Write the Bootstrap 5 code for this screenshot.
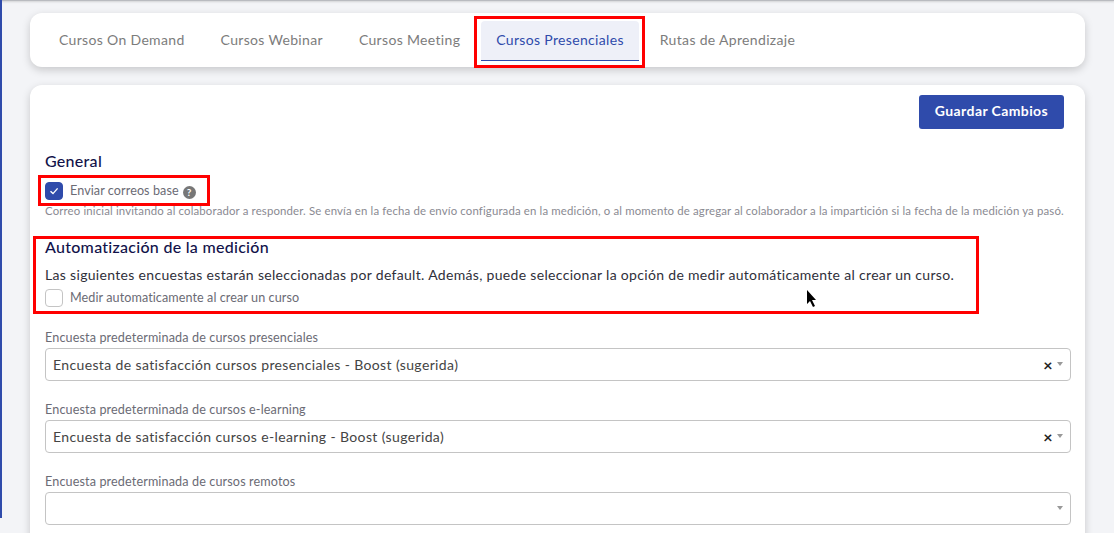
<!DOCTYPE html>
<html lang="es"><head><meta charset="utf-8"><title>Cursos Presenciales</title>
<link rel="stylesheet" href="https://cdn.jsdelivr.net/npm/bootstrap@5.3.0/dist/css/bootstrap.min.css">
<style>
html,body{height:533px;overflow:hidden}
body{background:#f3f4f7;font-family:"Lato","Noto Sans",sans-serif;color:#333;position:relative}
.side-strip{position:absolute;left:0;top:0;width:2px;height:518px;background:#2f4bab}
.top-line{height:1px;background:#b9bbc0;box-shadow:0 1px 2px rgba(0,0,0,.2)}
.page-wrap{padding:12px 29px 0 30px}
.panel{background:#fff;border:0;border-radius:12px;box-shadow:0 3px 8px rgba(0,0,0,.18)}
.tabs-panel{height:54px;padding:8px 14px 6px;margin-bottom:18px;gap:6px}
.tab-item{height:40px;padding:0 15px;font-size:14px;line-height:37px;color:#7c7c7c;letter-spacing:.33px;border-bottom:1px solid transparent;border-radius:4px 4px 0 0;text-decoration:none;white-space:nowrap}
.tab-item.is-on{background:#eef0f8;color:#2f4bab;border-bottom-color:#2f4bab}
.main-panel{padding:10px 14px 0 15px;height:470px;border-radius:12px}
.save-btn{background:#2f4bab;color:#fff;font-size:14px;font-weight:700;width:145px;height:34px;padding:0 0 3px;border:0;border-radius:3px;margin-right:7px;letter-spacing:.4px}
.sec-title{font-size:16px;font-weight:500;color:#12124a;line-height:20px;margin:0;letter-spacing:.28px}
.check-row{height:20px;font-size:12.6px;color:#6b6b75;letter-spacing:.08px;gap:7px}
.check-box{width:18px;height:18px;border-radius:4px;border:1px solid #c4c4c4;background:#fff;flex:none}
.check-box.is-on{background:#2f4bab;border-color:#2f4bab}
.help-dot{width:13px;height:13px;border-radius:50%;background:#777;color:#fff;font-size:10px;font-weight:700;line-height:13px;text-align:center;margin-left:-3px;margin-top:2px}
.hint-text{font-size:11.4px;color:#8a8a92;line-height:14px;letter-spacing:.15px;white-space:nowrap}
.body-text{font-size:14px;color:#2f2f3a;line-height:18px;letter-spacing:.32px;white-space:nowrap;margin-top:9px}
.field-label{font-size:12.6px;color:#6b6b75;line-height:16px;margin-bottom:2px;letter-spacing:.13px}
.pick-box{height:33px;border:1px solid #c4c4c4;border-radius:4px;padding:0 7px;font-size:14px;color:#444;letter-spacing:.37px;margin-bottom:21px;background:#fff}
.clear-x{color:#222;font-size:16px;font-weight:700;line-height:1;margin-right:4px}
.caret-down{width:0;height:0;border-left:3px solid transparent;border-right:3px solid transparent;border-top:4px solid #999;margin-top:-2px}
.title-general{margin-top:22px}
.title-auto{margin-top:19px}
.row-general{margin-top:10px}
.hint-gap{margin-top:3px}
.label-gap{margin-top:22px}
.red-mark{position:absolute;border:3px solid #f00;pointer-events:none}
.cursor-mark{position:absolute;left:806px;top:290px}
</style></head><body>
<div class="side-strip"></div>
<div class="top-line"></div>
<div class="page-wrap">
  <nav class="panel tabs-panel d-flex">
    <a class="tab-item" href="#">Cursos On Demand</a>
    <a class="tab-item" href="#">Cursos Webinar</a>
    <a class="tab-item" href="#">Cursos Meeting</a>
    <a class="tab-item is-on" href="#">Cursos Presenciales</a>
    <a class="tab-item" href="#">Rutas de Aprendizaje</a>
  </nav>
  <main class="panel main-panel">
    <div class="d-flex justify-content-end"><button class="btn save-btn" type="button">Guardar Cambios</button></div>
    <h2 class="sec-title title-general">General</h2>
    <div class="check-row row-general d-flex align-items-center">
      <span class="check-box is-on d-flex align-items-center justify-content-center"><svg width="12" height="12" viewBox="0 0 12 12"><path d="M2.5 6.2 5 8.6 9.6 3.4" fill="none" stroke="#fff" stroke-width="1.4"/></svg></span>
      <span>Enviar correos base</span><span class="help-dot">?</span>
    </div>
    <p class="hint-text hint-gap mb-0">Correo inicial invitando al colaborador a responder. Se envía en la fecha de envío configurada en la medición, o al momento de agregar al colaborador a la impartición si la fecha de la medición ya pasó.</p>
    <h2 class="sec-title title-auto">Automatización de la medición</h2>
    <p class="body-text mb-0">Las siguientes encuestas estarán seleccionadas por default. Además, puede seleccionar la opción de medir automáticamente al crear un curso.</p>
    <div class="check-row d-flex align-items-center mt-1">
      <span class="check-box"></span><span>Medir automaticamente al crear un curso</span>
    </div>
    <div class="field-label label-gap">Encuesta predeterminada de cursos presenciales</div>
    <div class="pick-box d-flex align-items-center"><span class="flex-grow-1">Encuesta de satisfacción cursos presenciales - Boost (sugerida)</span><span class="clear-x">×</span><span class="caret-down"></span></div>
    <div class="field-label">Encuesta predeterminada de cursos e-learning</div>
    <div class="pick-box d-flex align-items-center"><span class="flex-grow-1">Encuesta de satisfacción cursos e-learning - Boost (sugerida)</span><span class="clear-x">×</span><span class="caret-down"></span></div>
    <div class="field-label">Encuesta predeterminada de cursos remotos</div>
    <div class="pick-box d-flex align-items-center justify-content-end"><span class="caret-down"></span></div>
  </main>
</div>
<div class="red-mark" style="left:474px;top:16px;width:171px;height:52px"></div>
<div class="red-mark" style="left:38px;top:175px;width:172px;height:31px"></div>
<div class="red-mark" style="left:33px;top:236px;width:946px;height:78px"></div>
<svg class="cursor-mark" width="12" height="18" viewBox="0 0 12 18"><path d="M1 0v14l3-3 3 6 2-1-3-6h4z" fill="#000"/></svg>
</body></html>
